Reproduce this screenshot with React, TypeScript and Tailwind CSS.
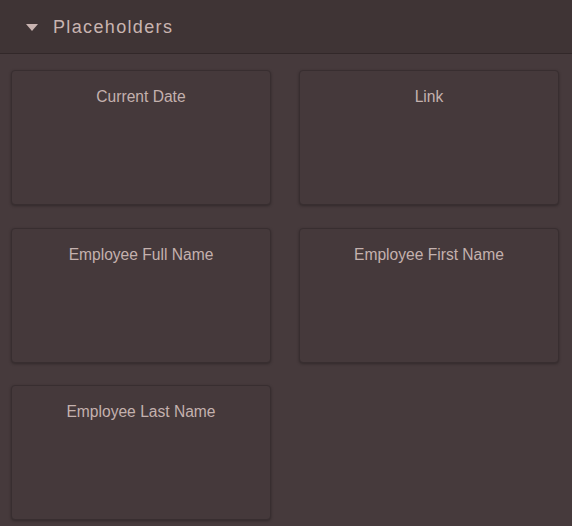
const items = [
  "Current Date",
  "Link",
  "Employee Full Name",
  "Employee First Name",
  "Employee Last Name",
];

export default function App() {
  return (
    <div className="w-[572px] h-[526px] overflow-hidden bg-[#463a3c] font-['Liberation_Sans',Arial,sans-serif]">
      {/* Section header */}
      <div className="h-[54px] flex items-center gap-[15px] pl-[26px] pt-[2px] bg-[#3f3435] border-b border-[#322829]">
        <svg width="12" height="7" viewBox="0 0 12 7">
          <polygon points="0,0 12,0 6,7" fill="#c9b4b1" />
        </svg>
        <span className="text-[18px] tracking-[1.35px] text-[#c9b4b1]">Placeholders</span>
      </div>

      {/* Cards */}
      <div className="grid grid-cols-[260px_260px] gap-x-[28px] gap-y-[22.5px] pl-[11px] pt-[16px]">
        {items.map((label) => (
          <div
            key={label}
            className="h-[135px] rounded-[4px] border border-[#382e30] bg-[#45393b] shadow-[0_1px_3px_rgba(0,0,0,0.3)] flex justify-center pt-[16px]"
          >
            <span className="text-[15.6px] text-[#c4b1ae] leading-[20px]">{label}</span>
          </div>
        ))}
      </div>
    </div>
  );
}
